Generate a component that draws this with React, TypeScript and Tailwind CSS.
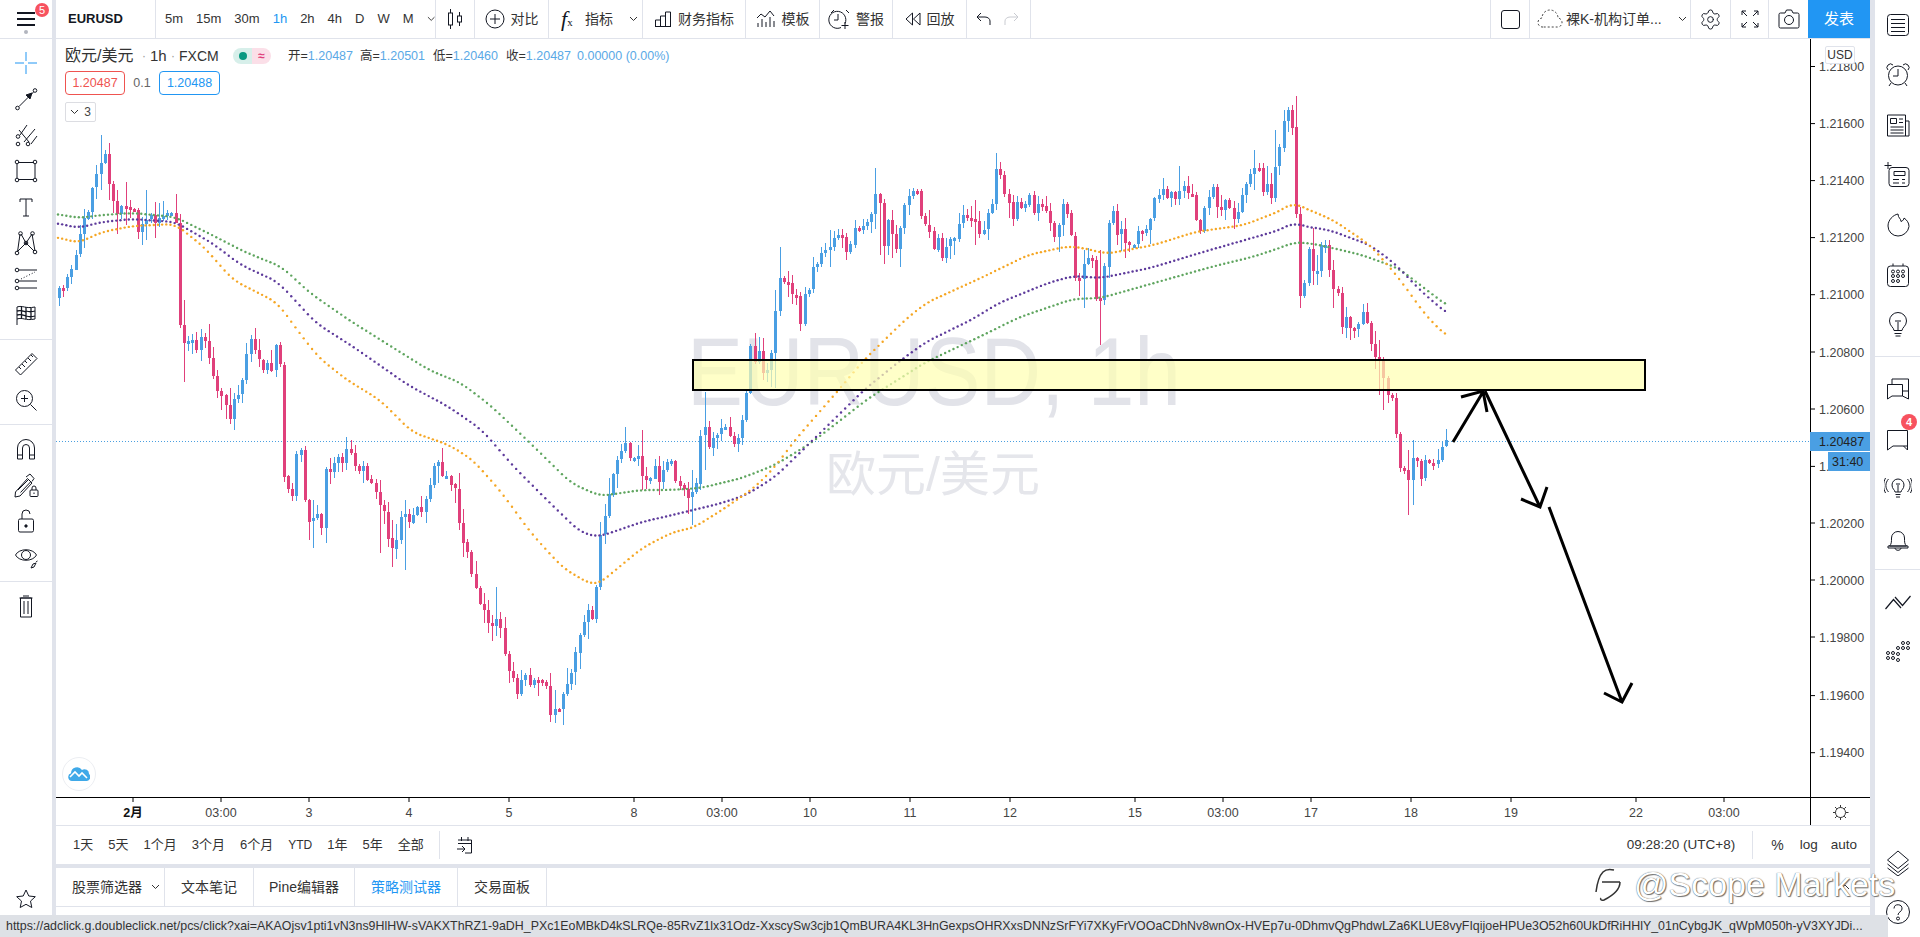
import type { ReactNode } from "react";
import { Settings } from "lucide-react";

// close prices traced from the picture, in page pixels
const CLOSES: [number, number][] = [
  [59, 298], [67, 283], [75, 263], [84, 217], [96, 177], [105, 157], [109, 180], [118, 207], [129, 200], [139, 227],
  [145, 213], [155, 217], [167, 213], [175, 213], [179, 325], [184, 337], [196, 353], [202, 333], [210, 360], [216, 383],
  [224, 407], [230, 413], [239, 390], [247, 350], [255, 343], [263, 360], [271, 380], [275, 335], [279, 340], [284, 480],
  [292, 490], [300, 440], [304, 505], [308, 513], [322, 528], [326, 470], [335, 457], [342, 465], [347, 448], [355, 457],
  [367, 470], [375, 487], [382, 513], [392, 547], [402, 520], [410, 530], [420, 505], [427, 490], [439, 463], [443, 477],
  [455, 493], [459, 523], [467, 547], [475, 587], [484, 617], [492, 617], [500, 620], [504, 647], [512, 673], [516, 693],
  [522, 680], [531, 683], [539, 677], [545, 680], [549, 711], [555, 712], [563, 690], [571, 680], [576, 645], [580, 630],
  [594, 610], [598, 570], [602, 520], [610, 483], [618, 463], [626, 442], [635, 460], [644, 470], [648, 473], [656, 473],
  [669, 470], [673, 463], [677, 490], [685, 490], [693, 497], [697, 473], [701, 420], [709, 447], [718, 440], [724, 423],
  [730, 443], [738, 433], [744, 415], [750, 353], [758, 353], [762, 363], [770, 360], [777, 302], [781, 267], [785, 277],
  [793, 293], [801, 317], [805, 302], [811, 280], [822, 243], [832, 247], [840, 243], [848, 250], [852, 227], [862, 223],
  [873, 207], [877, 182], [882, 240], [889, 225], [897, 247], [901, 213], [907, 207], [913, 187], [920, 210], [928, 238],
  [936, 243], [944, 255], [952, 237], [964, 220], [973, 210], [978, 228], [985, 227], [993, 197], [997, 170], [1003, 193],
  [1009, 213], [1018, 207], [1031, 203], [1036, 213], [1048, 213], [1052, 240], [1064, 207], [1068, 217], [1073, 257], [1078, 287],
  [1085, 270], [1093, 257], [1098, 332], [1106, 240], [1110, 213], [1118, 230], [1128, 253], [1136, 227], [1148, 227], [1152, 203],
  [1164, 187], [1173, 197], [1179, 183], [1190, 200], [1198, 217], [1202, 227], [1211, 190], [1216, 207], [1228, 207], [1235, 217],
  [1244, 190], [1252, 163], [1260, 180], [1266, 190], [1273, 203], [1277, 140], [1281, 137], [1286, 113], [1290, 103], [1294, 150],
  [1298, 272], [1302, 302], [1307, 240], [1311, 273], [1315, 270], [1320, 257], [1324, 250], [1328, 263], [1332, 278], [1336, 287],
  [1341, 320], [1343, 327], [1349, 320], [1355, 322], [1362, 320], [1369, 333], [1374, 368], [1378, 360], [1382, 387], [1386, 385],
  [1390, 400], [1394, 400], [1399, 483], [1402, 467], [1407, 487], [1411, 463], [1415, 452], [1419, 473], [1423, 477], [1427, 460],
  [1432, 482], [1436, 457], [1440, 452], [1444, 442], [1448, 442],
];

// long wicks that random noise would miss: x, high, low
const WICKS: [number, number, number][] = [
  [100, 135, 190], [109, 143, 200], [125, 182, 225], [146, 190, 240], [184, 300, 382], [313, 500, 548], [347, 437, 470],
  [380, 480, 553], [392, 520, 567], [405, 500, 570], [497, 587, 630], [555, 690, 717], [643, 430, 490], [693, 470, 525],
  [705, 392, 470], [777, 290, 388], [781, 247, 300], [876, 168, 210], [881, 220, 255], [893, 210, 258], [977, 200, 245],
  [997, 153, 210], [1085, 250, 308], [1102, 250, 345], [1181, 166, 205], [1256, 150, 190], [1277, 130, 170], [1294, 96, 165],
  [1302, 270, 308], [1311, 228, 285], [1315, 255, 285], [1378, 340, 395], [1382, 360, 410], [1407, 450, 515], [1411, 440, 505],
];

const GREEN: [number, number][] = [
  [57, 214], [78, 218], [102, 215], [133, 213], [175, 217], [212, 235], [245, 252], [282, 267], [310, 293], [349, 320], [392, 347],
  [429, 370], [461, 383], [490, 405], [527, 440], [571, 483], [600, 496], [642, 490], [669, 490], [701, 488], [742, 478], [775, 465],
  [811, 443], [869, 398], [926, 362], [979, 337], [1020, 317], [1073, 299], [1101, 298], [1154, 283], [1211, 267], [1252, 257],
  [1280, 248], [1294, 242], [1315, 244], [1362, 255], [1398, 268], [1449, 307],
];
const PURPLE: [number, number][] = [
  [57, 223], [78, 228], [102, 222], [133, 219], [175, 222], [212, 243], [241, 265], [278, 282], [316, 323], [355, 348], [408, 385],
  [449, 407], [482, 430], [514, 467], [547, 500], [580, 532], [598, 537], [642, 522], [681, 513], [722, 503], [746, 495], [775, 477],
  [815, 438], [864, 390], [901, 360], [926, 342], [971, 320], [999, 303], [1048, 283], [1073, 276], [1101, 278], [1150, 268],
  [1203, 252], [1252, 238], [1280, 230], [1294, 222], [1302, 226], [1329, 230], [1370, 245], [1394, 263], [1423, 293], [1449, 315],
];
const ORANGE: [number, number][] = [
  [57, 237], [78, 243], [102, 232], [133, 226], [175, 224], [204, 247], [233, 280], [278, 303], [292, 323], [318, 357], [347, 380],
  [380, 400], [412, 432], [449, 445], [473, 460], [502, 493], [531, 533], [563, 568], [592, 585], [600, 583], [642, 548], [673, 532],
  [693, 528], [722, 510], [754, 488], [775, 467], [795, 440], [836, 393], [864, 360], [905, 320], [926, 303], [983, 277], [1028, 255],
  [1069, 246], [1093, 250], [1105, 254], [1154, 245], [1195, 232], [1244, 225], [1280, 211], [1294, 202], [1302, 207], [1333, 220],
  [1370, 245], [1398, 277], [1427, 317], [1449, 338],
];

// 1.20400 is mostly hidden by the countdown tag, only its start shows
const PRICES: [string, number][] = [
  ["1.21800", 66.5], ["1.21600", 123.6], ["1.21400", 180.6], ["1.21200", 237.6], ["1.21000", 294.7], ["1.20800", 352],
  ["1.20600", 409], ["1.", 466.4], ["1.20200", 523], ["1.20000", 580], ["1.19800", 637], ["1.19600", 695.6], ["1.19400", 752.7],
];

const TIMES: [string, number, boolean?][] = [
  ["2月", 133, true], ["03:00", 221], ["3", 309], ["4", 409], ["5", 509], ["8", 634], ["03:00", 722], ["10", 810], ["11", 910],
  ["12", 1010], ["15", 1135], ["03:00", 1223], ["17", 1311], ["18", 1411], ["19", 1511], ["22", 1636], ["03:00", 1724],
];

const STATUS_URL =
  "https://adclick.g.doubleclick.net/pcs/click?xai=AKAOjsv1pti1vN3ns9HlHW-sVAKXThRZ1-9aDH_PXc1EoMBkD4kSLRQe-85RvZ1lx31Odz-XxscySw3cjb1QmBURA4KL3HnGexpsOHRXxsDNNzSrFYi7XKyFrVOOaCDhNv8wnOx-HVEp7u-0DhmvQgPhdwLZa6KLUE8vyFIqijoeHPUe3O52h60UkDfRiHHlY_01nCybgJK_qWpM050h-yV3XYJDi...";

function interp(pts: [number, number][], x: number) {
  if (x <= pts[0][0]) return pts[0][1];
  for (let i = 1; i < pts.length; i++) {
    if (x <= pts[i][0]) {
      const [x0, y0] = pts[i - 1];
      const [x1, y1] = pts[i];
      return y0 + ((y1 - y0) * (x - x0)) / (x1 - x0);
    }
  }
  return pts[pts.length - 1][1];
}

function makeRandom(seed: number) {
  let a = seed;
  return () => {
    a = (a + 0x6d2b79f5) | 0;
    let t = Math.imul(a ^ (a >>> 15), 1 | a);
    t = (t + Math.imul(t ^ (t >>> 7), 61 | t)) ^ t;
    return ((t ^ (t >>> 14)) >>> 0) / 4294967296;
  };
}

const BAR_XS = Array.from({ length: 334 }, (_, i) => 59 + i * 4.165);

function makeCandles() {
  const rnd = makeRandom(7);
  let prev = interp(CLOSES, 55);
  return BAR_XS.map((x) => {
    const close = interp(CLOSES, x) + (rnd() - 0.5) * 20;
    const open = prev;
    prev = close;
    let high = Math.min(open, close) - rnd() * rnd() * 20 - 1;
    let low = Math.max(open, close) + rnd() * rnd() * 20 + 1;
    for (const [wx, h, l] of WICKS) {
      if (Math.abs(wx - x) <= 2.1) {
        high = Math.min(high, h);
        low = Math.max(low, l);
      }
    }
    return { x: Math.round(x), open, close, high, low };
  });
}

function dots(pts: [number, number][]) {
  const xs = Array.from({ length: 334 }, (_, i) => 58 + i * 4.165);
  return xs.map((x) => {
    let sum = 0;
    for (let k = -2; k <= 2; k++) sum += interp(pts, x + k * 4);
    return { x, y: sum / 5 };
  });
}

const CANDLES = makeCandles();

function Chart() {
  return (
    <svg width={1814} height={786} viewBox="56 39 1814 786" className="block">
      <text x={687} y={405} textLength={494} lengthAdjust="spacingAndGlyphs" fontSize={97} fill="#e2e3e9">
        EURUSD, 1h
      </text>
      <text x={826} y={491} textLength={214} lengthAdjust="spacingAndGlyphs" fontSize={48} fill="#e5e6eb">
        欧元/美元
      </text>
      <line x1={56} x2={1810} y1={441.5} y2={441.5} stroke="#4a9fe0" strokeDasharray="1 2" />
      {CANDLES.map((c, i) => {
        const color = c.close < c.open ? "#4a9fe3" : "#e0407b";
        const top = Math.round(Math.min(c.open, c.close));
        const h = Math.max(3, Math.round(Math.abs(c.open - c.close)));
        return (
          <g key={i} fill={color} shapeRendering="crispEdges">
            <rect x={c.x} y={Math.round(c.high)} width={1} height={Math.round(c.low - c.high)} />
            <rect x={c.x - 1} y={top} width={3} height={h} />
          </g>
        );
      })}
      {dots(GREEN).map((d, i) => (
        <circle key={i} cx={d.x} cy={d.y} r={1.2} fill="#5fa55f" />
      ))}
      {dots(PURPLE).map((d, i) => (
        <circle key={i} cx={d.x} cy={d.y} r={1.2} fill="#5d3a9b" />
      ))}
      {dots(ORANGE).map((d, i) => (
        <circle key={i} cx={d.x} cy={d.y} r={1.2} fill="#f5a623" />
      ))}

      <rect x={693} y={360} width={952} height={30} fill="#ffffb0" fillOpacity={0.7} stroke="#000" strokeWidth={2} />

      <g fill="none" stroke="#000" strokeWidth={3}>
        <path d="M1453 442 L1483 392 M1461 397 L1483 391 L1487 412" />
        <path d="M1485 391 L1540 507 M1521 499 L1540 507 L1547 487" />
        <path d="M1549 507 L1622 702 M1604 693 L1622 702 L1632 683" />
      </g>

      <rect x={1810} y={39} width={60} height={758} fill="#fff" />
      <line x1={1810.5} x2={1810.5} y1={39} y2={825} stroke="#000" />
      <line x1={56} x2={1870} y1={797.5} y2={797.5} stroke="#000" />
      {PRICES.map(([label, y]) => (
        <g key={label}>
          <line x1={1810} x2={1815} y1={y} y2={y} stroke="#000" />
          <text x={1819} y={y + 4.5} fontSize={12.5} fill="#444">
            {label}
          </text>
        </g>
      ))}
      <rect x={1810} y={432} width={60} height={19} fill="#4a9fe3" />
      <text x={1819} y={446} fontSize={12.5} fill="#222">
        1.20487
      </text>
      <rect x={1828} y={452} width={42} height={19} fill="#4a9fe3" />
      <text x={1832} y={466} fontSize={12.5} fill="#222">
        31:40
      </text>

      {TIMES.map(([label, x, bold], i) => (
        <g key={i}>
          <line x1={x} x2={x} y1={797} y2={802} stroke="#000" />
          <text x={x} y={817} fontSize={12.5} textAnchor="middle" fill={bold ? "#111" : "#444"} fontWeight={bold ? 700 : 400}>
            {label}
          </text>
        </g>
      ))}
      <g fill="none" stroke="#333">
        <circle cx={1840.5} cy={812.5} r={5} />
        <path d="M1840.5 805v2.5M1840.5 817.500v2.500M1833 812.500h2.500M1846 812.500h2.500M1835 807l1.800 1.800M1844.200 816.200l1.800 1.800M1846 807l-1.800 1.800M1836.800 816.200l-1.800 1.800" />
      </g>
    </svg>
  );
}

function Legend() {
  return (
    <div className="absolute left-[9px] top-[8px] flex flex-col text-[#333]">
      <div className="flex h-[18px] items-center">
        <span className="w-[73px] text-[16px]">欧元/美元</span>
        <span className="w-[12px] text-center text-[12px] text-[#999]">·</span>
        <span className="w-[17px] text-[15px]">1h</span>
        <span className="w-[12px] text-center text-[12px] text-[#999]">·</span>
        <span className="w-[54px] text-[14px]">FXCM</span>
        <div className="flex h-[16px] w-[38px] overflow-hidden rounded-full">
          <div className="flex w-1/2 items-center justify-center bg-[#d7efea]">
            <div className="h-[8px] w-[8px] rounded-full bg-[#089981]" />
          </div>
          <div className="flex w-1/2 items-center justify-center bg-[#fbdfe8] text-[12px] font-bold text-[#e0407b]">≈</div>
        </div>
        <div className="ml-[17px] flex text-[12.5px] text-[#5aa9e6]">
          <span className="w-[72px]"><span className="text-[#333]">开=</span>1.20487</span>
          <span className="w-[73px]"><span className="text-[#333]">高=</span>1.20501</span>
          <span className="w-[73px]"><span className="text-[#333]">低=</span>1.20460</span>
          <span className="w-[71px]"><span className="text-[#333]">收=</span>1.20487</span>
          <span>0.00000 (0.00%)</span>
        </div>
      </div>
      <div className="mt-[6px] flex h-[24px] items-center text-[12.5px]">
        <div className="flex h-full w-[60px] items-center justify-center rounded-[4px] border border-[#ef5350] text-[#ef5350]">1.20487</div>
        <span className="w-[34px] text-center text-[#666]">0.1</span>
        <div className="flex h-full w-[61px] items-center justify-center rounded-[4px] border border-[#2196f3] text-[#2196f3]">1.20488</div>
      </div>
      <div className="mt-[7px] flex h-[20px] w-[31px] items-center justify-center gap-[5px] rounded-[2px] border border-[#dcdde2] text-[12px] text-[#444]">
        <Chevron />
        <span>3</span>
      </div>
    </div>
  );
}

function Chevron({ className = "" }: { className?: string }) {
  return (
    <svg width={9} height={6} viewBox="0 0 9 6" fill="none" stroke="#333" className={className}>
      <path d="M1 1l3.500 3.500L8 1" />
    </svg>
  );
}

function Ic({ children, className = "" }: { children: ReactNode; className?: string }) {
  return (
    <svg width={28} height={28} viewBox="0 0 28 28" fill="none" stroke="currentColor" className={className}>
      {children}
    </svg>
  );
}

const LEFT_GROUPS: ReactNode[][] = [
  [
    <Ic className="text-[#2196f3]" key="cross"><path d="M14 3v9M14 16v9M3 14h9M16 14h9" /></Ic>,
    <Ic key="arrow">
      <circle cx="5.500" cy="23" r="1.800" /><circle cx="23" cy="5.500" r="1.800" /><path d="M7 21.500L21.500 7" />
      <path d="M20 8l-2 6-4-4z" fill="currentColor" />
    </Ic>,
    <Ic key="channel">
      <path d="M8 14L15 4M12 21l11-13M19 23l6-8M7 9l10 12" />
      <circle cx="6" cy="15.500" r="1.800" /><circle cx="6" cy="23" r="1.800" /><circle cx="16" cy="23" r="1.800" />
    </Ic>,
    <Ic key="rect">
      <path d="M6 5.500h16M6 22.500h16M5 7v14M23 7v14" />
      <circle cx="5" cy="5" r="1.800" /><circle cx="23" cy="5" r="1.800" /><circle cx="5" cy="23" r="1.800" /><circle cx="23" cy="23" r="1.800" />
    </Ic>,
    <Ic key="t"><path d="M8 9V6h12v3M14 6v17M11 23h6" /></Ic>,
    <Ic key="xabcd">
      <path d="M5.500 23L8 5M9 5l5 9M14 14l6-9M20 5l3 17M6 22l8-8M14 14l8 8" />
      <circle cx="5" cy="24" r="1.800" /><circle cx="8.500" cy="4.500" r="1.800" /><circle cx="14" cy="14" r="1.800" /><circle cx="20.500" cy="4.500" r="1.800" /><circle cx="23" cy="23" r="1.800" />
    </Ic>,
    <Ic key="fib">
      <path d="M7 5h18M7 23h18M7 16h18" />
      <path d="M9 14l14-7" strokeDasharray="1 2" />
      <circle cx="5" cy="5" r="1.800" /><circle cx="5" cy="16" r="1.800" /><circle cx="5" cy="23" r="1.800" />
    </Ic>,
    <Ic key="flag">
      <path d="M5 24V6c6-2 8 2 18 0v12c-10 2-12-2-18 0" />
      <path d="M5 10c4-1 6 0 9 1M5 14c4-1 6 0 9 1M14 6v12M9.500 5.500v12.500M19 7v11M14 10c3 1 6 1 9 0M14 15c3 1 6 1 9 0" strokeWidth="1.300" />
    </Ic>,
  ],
  [
    <Ic key="ruler">
      <path d="M3.500 20L20 3.500 25 8.500 8.500 25z" />
      <path d="M7 17l2 2M10 14l3 3M13 11l2 2M16 8l3 3M19 5l2 2" />
    </Ic>,
    <Ic key="zoom">
      <circle cx="12.500" cy="12.500" r="8" /><path d="M18.500 18.500l6 6M12.500 9v7M9 12.500h7" />
    </Ic>,
  ],
  [
    <Ic key="magnet">
      <path d="M5.500 24V13a8.500 8.500 0 0117 0v11h-5V13a3.500 3.500 0 00-7 0v11z" /><path d="M5.500 20h5M17.500 20h5" />
    </Ic>,
    <Ic key="pencil">
      <path d="M3.500 21l-.5 5 5-1L20 12l-4.500-4.500z" /><path d="M6 19L17 8M8.500 21.500L18.500 11M14 6l4-3 4 4.500-2 3" />
      <rect x="18" y="19" width="8" height="6.500" rx="1" fill="#fff" /><path d="M20 19v-2a2 2 0 014 0v2M22 21.500v1.500" />
    </Ic>,
    <Ic key="lock">
      <rect x="6.500" y="12" width="15" height="13" rx="1.500" /><path d="M10 12V7a4 4 0 018 0" />
      <circle cx="14" cy="19" r="1.200" fill="currentColor" />
    </Ic>,
    <Ic key="eye">
      <path d="M3.500 12C7 5 21 5 24.500 12 21 19 7 19 3.500 12z" /><circle cx="14" cy="12" r="4.500" />
      <path d="M19 25l2-4 3-1-2 4-3 1zM24 19l1.500-1" />
    </Ic>,
  ],
  [
    <Ic key="trash">
      <path d="M8.500 6h11v19h-11zM7.500 6h13M11 4h6M12 9v13M16 9v13" />
    </Ic>,
  ],
];

function LeftRail() {
  return (
    <div className="flex w-[52px] shrink-0 flex-col text-[#131722]">
      <div className="relative flex h-[39px] items-center justify-center border-b border-[#e0e3eb]">
        <div className="flex flex-col gap-[4px]">
          <div className="h-[2px] w-[18px] bg-[#131722]" />
          <div className="h-[2px] w-[18px] bg-[#131722]" />
          <div className="h-[2px] w-[18px] bg-[#131722]" />
        </div>
        <div className="absolute left-[35px] top-[3px] flex h-[14px] w-[14px] items-center justify-center rounded-full bg-[#f7525f] text-[11px] text-white">5</div>
        <div className="absolute left-[24px] top-[30px] h-[4px] w-[4px] rounded-full bg-[#b2b5be]" />
      </div>
      <div className="flex flex-1 flex-col pt-[6px]">
        {LEFT_GROUPS.map((group, i) => (
          <div key={i} className={i > 0 ? "mt-[6px] border-t border-[#e0e3eb] pt-[6px]" : ""}>
            {group.map((icon, k) => (
              <div key={k} className="flex h-[36px] items-center justify-center">{icon}</div>
            ))}
          </div>
        ))}
      </div>
      <div className="flex h-[50px] items-start justify-center pt-[1px]">
        <svg width={22} height={22} viewBox="0 0 22 22" fill="none" stroke="#131722">
          <path d="M11 2l2.800 6 6.500.7-4.800 4.400 1.300 6.400L11 16.300 5.200 19.500l1.300-6.400L1.700 8.700 8.200 8z" />
        </svg>
      </div>
    </div>
  );
}

function Seg({ w, left, children }: { w: string; left?: boolean; children: ReactNode }) {
  return (
    <div className={`flex h-full items-center justify-center gap-[6px] border-[#e0e3eb] ${w} ${left ? "border-l" : "border-r"}`}>
      {children}
    </div>
  );
}

function TopBar() {
  return (
    <div className="flex h-[39px] items-center border-b border-[#e0e3eb] text-[14px] text-[#333]">
      <div className="flex h-full w-[100px] items-center border-r border-[#e0e3eb] pl-[12px] text-[13px] font-bold text-[#131722]">EURUSD</div>
      <div className="flex h-full w-[280px] items-center gap-[13px] border-r border-[#e0e3eb] pl-[9px] text-[13px]">
        <span>5m</span>
        <span>15m</span>
        <span>30m</span>
        <span className="text-[#2196f3]">1h</span>
        <span>2h</span>
        <span>4h</span>
        <span>D</span>
        <span>W</span>
        <span>M</span>
        <Chevron />
      </div>
      <Seg w="w-[39px]">
        <Ic className="text-[#131722]"><path d="M9.500 4v20M18.500 7v14" /><rect x="7.500" y="8" width="4" height="12" fill="#fff" /><rect x="16.500" y="11" width="4" height="6" fill="#fff" /></Ic>
      </Seg>
      <Seg w="w-[74px]">
        <svg width={20} height={20} viewBox="0 0 20 20" fill="none" stroke="#131722"><circle cx="10" cy="10" r="9" /><path d="M10 5v10M5 10h10" /></svg>
        <span>对比</span>
      </Seg>
      <div className="flex h-full w-[94px] items-center border-r border-[#e0e3eb] pl-[12px]">
        <span className="w-[24px] font-['Liberation_Serif',serif] text-[22px] italic leading-none text-[#131722]">f<span className="text-[11px] not-italic">x</span></span>
        <span>指标</span>
        <Chevron className="ml-[16px]" />
      </div>
      <Seg w="w-[103px]">
        <svg width={18} height={16} viewBox="0 0 18 16" fill="none" stroke="#131722"><path d="M1 15.500h16M1.500 15V9h5v6M6.500 15V5h5v10M11.500 15V1h5v14" /></svg>
        <span>财务指标</span>
      </Seg>
      <Seg w="w-[74px]">
        <svg width={20} height={18} viewBox="0 0 20 18" fill="none" stroke="#131722"><path d="M1 8l4-4 4 3 5-6 4 5M2 17v-4M6 17V9M10 17v-5M14 17V7M18 17v-6" /></svg>
        <span>模板</span>
      </Seg>
      <Seg w="w-[73px]">
        <svg width={22} height={22} viewBox="0 0 22 22" fill="none" stroke="#131722"><path d="M13 19.500a8.500 8.500 0 114-4M10 6v6H6M3 5l3-3M18 2l3 3M17 14v7M13.500 17.500h7" /></svg>
        <span>警报</span>
      </Seg>
      <Seg w="w-[74px]">
        <svg width={16} height={14} viewBox="0 0 16 14" fill="none" stroke="#131722"><path d="M7.500 1L1 7l6.500 6zM15 1L8.500 7l6.500 6z" /></svg>
        <span>回放</span>
      </Seg>
      <div className="flex h-full w-[64px] items-center gap-[13px] border-r border-[#e0e3eb] pl-[9px]">
        <svg width={15} height={14} viewBox="0 0 15 14" fill="none" stroke="#131722"><path d="M5 1L1 5l4 4M1 5h8c3 0 5 2 5 4v4" /></svg>
        <svg width={15} height={14} viewBox="0 0 15 14" fill="none" stroke="#c9cbd1"><path d="M10 1l4 4-4 4M14 5H6C3 5 1 7 1 9v4" /></svg>
      </div>
      <div className="flex-1" />
      <Seg w="w-[39px]" left>
        <div className="h-[19px] w-[19px] rounded-[3px] border border-[#131722]" />
      </Seg>
      <div className="flex h-full w-[162px] items-center border-x border-[#e0e3eb] pl-[7px]">
        <svg width={26} height={20} viewBox="0 0 26 20" fill="none" stroke="#444" strokeDasharray="2 2" className="mr-[3px]">
          <path d="M6 18a4.500 4.500 0 01-1-9 8 8 0 0116 0 4.500 4.500 0 01-1 9z" />
        </svg>
        <span className="w-[102px] text-[#333]">裸K-机构订单...</span>
        <Chevron className="ml-[10px]" />
      </div>
      <Seg w="w-[40px]">
        <Settings size={23} strokeWidth={1} color="#131722" />
      </Seg>
      <Seg w="w-[38px]">
        <svg width={18} height={18} viewBox="0 0 18 18" fill="none" stroke="#131722"><path d="M1 5V1h4M1 1l5 5M13 1h4v4M17 1l-5 5M1 13v4h4M1 17l5-5M17 13v4h-4M17 17l-5-5" /></svg>
      </Seg>
      <div className="flex h-full w-[39px] items-center justify-center">
        <svg width={22} height={20} viewBox="0 0 22 20" fill="none" stroke="#131722"><path d="M2.500 4H7l1.500-3h5L15 4h4.500A1.500 1.500 0 0121 5.500v12a1.500 1.500 0 01-1.500 1.500h-17A1.500 1.500 0 011 17.500v-12A1.500 1.500 0 012.500 4z" /><circle cx="11" cy="11" r="4.500" /></svg>
      </div>
      <div className="flex h-full w-[62px] items-center justify-center bg-[#2196f3] text-[15px] text-white">发表</div>
    </div>
  );
}

function RangeBar() {
  return (
    <div className="flex h-[39px] items-center border-t border-[#e0e3eb] text-[13px] text-[#333]">
      <div className="flex items-center gap-[15px] pl-[17px]">
        <span>1天</span>
        <span>5天</span>
        <span>1个月</span>
        <span>3个月</span>
        <span>6个月</span>
        <span className="text-[12px]">YTD</span>
        <span>1年</span>
        <span>5年</span>
        <span>全部</span>
      </div>
      <div className="ml-[15px] h-[28px] border-l border-[#e0e3eb]" />
      <svg width={18} height={18} viewBox="0 0 18 18" fill="none" stroke="#131722" className="ml-[16px]">
        <path d="M2 4h13.500v13H9M2 7.500h13.500M5.500 1v4M12 1v4M1 13h8M6 10l3 3-3 3" />
      </svg>
      <div className="flex-1" />
      <span className="text-[13.5px]">09:28:20 (UTC+8)</span>
      <div className="ml-[17px] h-[28px] border-l border-[#e0e3eb]" />
      <span className="ml-[18px] text-[14px]">%</span>
      <span className="ml-[16px] text-[13.5px]">log</span>
      <span className="ml-[13px] mr-[13px] text-[13.5px]">auto</span>
    </div>
  );
}

function Tabs() {
  return (
    <div className="relative flex h-[39px] items-stretch border-b border-[#e0e3eb] text-[14px] text-[#333]">
      <div className="flex w-[109px] items-center border-r border-[#e0e3eb] pl-[16px]">
        <span>股票筛选器</span>
        <Chevron className="ml-[9px]" />
      </div>
      <div className="flex w-[89px] items-center justify-center border-r border-[#e0e3eb]">文本笔记</div>
      <div className="flex w-[101px] items-center justify-center border-r border-[#e0e3eb]">Pine编辑器</div>
      <div className="flex w-[103px] items-center justify-center border-r border-[#e0e3eb] text-[#2196f3]">策略测试器</div>
      <div className="flex w-[89px] items-center justify-center border-r border-[#e0e3eb]">交易面板</div>
      <div className="ml-auto mr-[20px] flex items-center">
        <svg width={10} height={8} viewBox="0 0 10 8" fill="none" stroke="#333"><path d="M1 6l4-4 4 4" /></svg>
      </div>
    </div>
  );
}

const RIGHT_TOP: ReactNode[] = [
  <Ic key="list"><rect x="3.500" y="3.500" width="21" height="21" rx="3" /><path d="M7 8.500h14M7 12.500h14M7 16.500h14M7 20.500h14" /></Ic>,
  <Ic key="alarm"><circle cx="14" cy="14.500" r="9.500" /><path d="M14 8v7H9M4 9a3.500 3.500 0 015-5M24 9a3.500 3.500 0 00-5-5M7 22l-2 3M21 22l2 3" /></Ic>,
  <Ic key="news"><path d="M3.500 4h18v21h-18zM21.500 10H25v15h-3.500M6.500 7.500h6v5h-6zM15 8h4M15 11.500h4M6.500 16h13M6.500 19h13M6.500 22h13" /></Ic>,
  <Ic key="note"><rect x="5" y="6.500" width="20" height="19" rx="3" /><path d="M10 10.500h11v4H10zM9 18.500h6M18 18.500h3M9 22h6M18 22h3M4 1v7M.5 4.500h7" /></Ic>,
  <Ic key="flame"><path d="M14 3c0 4 3 4.500 3 7.500 2-.5 3-2.500 3-3.500 3 2 5 5 5 8.500A11 11 0 0114 25 10 10 0 014 15C4 9 9 4 14 3z" /></Ic>,
  <Ic key="calendar">
    <rect x="3.500" y="5" width="21" height="20.500" rx="3" /><path d="M9 2.500V5M19 2.500V5" />
    <circle cx="9" cy="10.500" r="1.500" /><circle cx="14" cy="10.500" r="1.500" /><circle cx="19" cy="10.500" r="1.500" />
    <circle cx="9" cy="15" r="1.500" /><circle cx="14" cy="15" r="1.500" /><circle cx="19" cy="15" r="1.500" />
    <circle cx="9" cy="20" r="1.500" /><circle cx="14" cy="20" r="1.500" />
  </Ic>,
  <Ic key="bulb"><path d="M10 19.500c0-3-4.500-4.500-4.500-9.500a8.500 8.500 0 0117 0c0 5-4.500 6.500-4.500 9.500zM10.500 22.500h7M11.500 25h5M14 19V11M11 10h6" /></Ic>,
];

const RIGHT_MID: ReactNode[] = [
  <Ic key="chats"><path d="M3.500 9.500h15v11.500H8l-4.500 3zM8 9.500V4h16.500v12h-6M24.500 16v8l-6-3" /></Ic>,
  <Ic key="chat"><path d="M3.500 5.500h20v15.500H9l-5.500 4zM23.500 21v4l-4-4" /></Ic>,
  <Ic key="idea"><path d="M11 17c0-2-3-3-3-7a6 6 0 0112 0c0 4-3 5-3 7zM11.500 19.500h5M12 22h4M14 17v-7M12 9h4M4.500 4C1 8 1 13 4.500 17M1.500 3C-1 8-1 13 1.500 18M23.500 4c3.500 4 3.500 9 0 13M26.500 3c2.500 5 2.500 10 0 15" /></Ic>,
  <Ic key="bell"><path d="M5.500 21c2-2 2-4 2-8a6.500 6.500 0 0113 0c0 4 0 6 2 8zM4 21h20v2H4zM11 23c0 3 6 3 6 0" /></Ic>,
];

function RightRail() {
  return (
    <div className="flex w-[45px] shrink-0 flex-col text-[#131722]">
      {RIGHT_TOP.map((icon, i) => (
        <div key={i} className="flex h-[50px] items-center justify-center">{icon}</div>
      ))}
      <div className="mt-[6px] border-t border-[#e0e3eb]" />
      <div className="mt-[7px]">
        {RIGHT_MID.map((icon, i) => (
          <div key={i} className="relative flex h-[50px] items-center justify-center">
            {icon}
            {i === 1 && (
              <div className="absolute left-[26px] top-[0px] flex h-[16px] w-[16px] items-center justify-center rounded-full bg-[#f7525f] text-[11px] font-bold text-white">4</div>
            )}
          </div>
        ))}
      </div>
      <div className="mt-[5px] border-t border-[#e0e3eb]" />
      <div className="flex h-[56px] items-center justify-center pt-[6px]">
        <Ic><path d="M1.500 22L9.500 12.500 17 21M11 10l7.500 8.500L26.500 9" strokeWidth="1.200" /></Ic>
      </div>
      <div className="flex h-[50px] items-center justify-center">
        <svg width={26} height={22} viewBox="0 0 26 22" fill="none" stroke="#131722">
          <circle cx="3" cy="13" r="1.500" /><circle cx="8" cy="13" r="1.500" /><circle cx="3" cy="18" r="1.500" /><circle cx="8" cy="18" r="1.500" />
          <circle cx="13" cy="8" r="1.500" /><circle cx="13" cy="14" r="1.500" /><circle cx="13" cy="20" r="1.500" />
          <circle cx="18" cy="3" r="1.500" /><circle cx="23" cy="3" r="1.500" /><circle cx="18" cy="8" r="1.500" /><circle cx="23" cy="8" r="1.500" />
        </svg>
      </div>
      <div className="flex-1" />
      <div className="flex h-[50px] items-center justify-center">
        <Ic><path d="M14 3l10.500 9L14 20.500 3.500 12zM3.500 16L14 24.500 24.500 16M3.500 20L14 28 24.500 20" /></Ic>
      </div>
      <div className="flex h-[50px] items-center justify-center">
        <Ic><circle cx="14" cy="14" r="11.500" /><path d="M10 10.500a4 4 0 118 .5c0 2.500-4 3-4 6" /><circle cx="14" cy="20.500" r="1.500" /></Ic>
      </div>
    </div>
  );
}

export default function App() {
  return (
    <div className="relative flex h-[937px] w-[1920px] overflow-hidden bg-white font-['Liberation_Sans','Noto_Sans_CJK_SC',sans-serif]">
      <LeftRail />
      <div className="w-[4px] shrink-0 bg-[#e0e3eb]" />
      <div className="flex w-[1814px] shrink-0 flex-col">
        <TopBar />
        <div className="relative h-[786px]">
          <Chart />
          <Legend />
          <div className="absolute left-[1769px] top-[7px] flex h-[18px] w-[30px] items-center justify-center rounded-[2px] border border-[#e0e3eb] bg-white text-[12px] text-[#333]">USD</div>
          <div className="absolute left-[6px] top-[718px] flex h-[34px] w-[34px] items-center justify-center rounded-full border border-[#eceef2] bg-white">
            <svg width={22} height={14} viewBox="0 0 22 14">
              <path d="M4 14a4 4 0 01-1-7.800A6 6 0 0114 3a4.500 4.500 0 017 4 4 4 0 01-3 7z" fill="#3fa9e8" />
              <path d="M2 10l5-5 4 4 3-3 5 5" fill="none" stroke="#fff" strokeWidth="1.600" />
            </svg>
          </div>
        </div>
        <RangeBar />
        <div className="h-[4px] bg-[#e0e3eb]" />
        <Tabs />
      </div>
      <div className="w-[5px] shrink-0 bg-[#e0e3eb]" />
      <RightRail />

      <div className="absolute bottom-0 left-0 flex h-[22px] w-[1888px] items-center overflow-hidden bg-[#dee1e6] pl-[6px] text-[12.4px] whitespace-nowrap text-[#333]">
        {STATUS_URL}
      </div>

      <div className="absolute left-[1594px] top-[866px] flex items-center gap-[12px]">
        <svg width={28} height={36} viewBox="0 0 28 36" fill="none" stroke="#333" strokeWidth="1.500">
          <path d="M2 26c1-8 3-16 7-20 3-3 7-3 11-2M8 16h18M26 16c0 8-8 14-16 18-3 1-4-1-3-2" />
        </svg>
        <span className="text-[34px] leading-none text-white [text-shadow:0_0_1px_#333,1px_1px_1px_#777]">@Scope Markets</span>
      </div>
    </div>
  );
}
